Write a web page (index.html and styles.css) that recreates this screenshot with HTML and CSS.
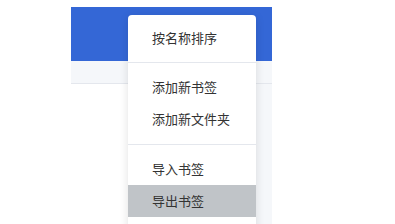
FILE: index.html
```html
<!DOCTYPE html>
<html lang="zh-CN">
<head>
    <meta charset="UTF-8">
    <meta name="viewport" content="width=device-width, initial-scale=1.0">
    <title>书签</title>
    <link rel="stylesheet" href="styles.css">
</head>
<body>
    <div class="app">
        <header class="app-header"></header>
        <div class="toolbar"></div>
        <div class="content">
            <div class="scroll-track"></div>
        </div>
    </div>

    <ul class="dropdown">
        <li class="item">按名称排序</li>
        <li class="divider"></li>
        <li class="item">添加新书签</li>
        <li class="item">添加新文件夹</li>
        <li class="divider divider-lower"></li>
        <li class="item">导入书签</li>
        <li class="item active">导出书签</li>
    </ul>
</body>
</html>
```

FILE: styles.css
```css
/* styles.css */
body {
    margin: 0;
    padding: 0;
    background-color: #fff;
    font-family: "Noto Sans CJK SC", "Noto Sans", sans-serif;
    overflow: hidden;
}

.app {
    margin: 7px 0 0 71px;
    width: 201px;
}

.app-header {
    height: 54px;
    background-color: #3467d6;
}

.toolbar {
    height: 22px;
    background-color: #f5f7fa;
    border-bottom: 1px solid #e4e7ed;
}

.content {
    height: 200px;
    display: flex;
    justify-content: flex-end;
}

.scroll-track {
    width: 16px;
    background-color: #f5f7fa;
}

.dropdown {
    position: absolute;
    top: 15px;
    left: 128px;
    width: 128px;
    margin: 0;
    padding: 7px 0 40px;
    list-style: none;
    background-color: #fff;
    border-radius: 4px;
    box-shadow: 0 2px 10px rgba(0, 0, 0, 0.12);
}

.dropdown .item {
    height: 32px;
    line-height: 32px;
    padding-left: 24px;
    font-size: 13px;
    color: #333;
    white-space: nowrap;
}

.dropdown .item.active {
    background-color: #c0c4c8;
}

.dropdown .divider {
    height: 1px;
    margin: 8px 0;
    background-color: #e4e7ed;
}

.dropdown .divider-lower {
    margin-top: 9px;
}
```
